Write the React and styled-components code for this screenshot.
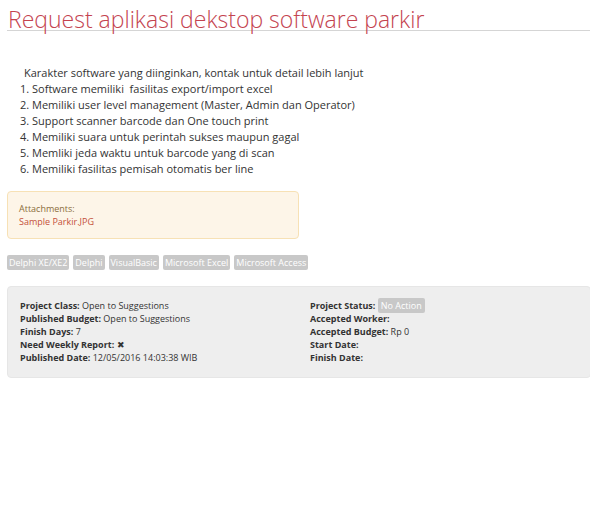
import React from 'react'
import styled, { createGlobalStyle } from 'styled-components'

const GlobalStyle = createGlobalStyle`
    body {
        margin: 8px 10px 8px 7px;
        background: #ffffff;
        font-family: "Open Sans", "Liberation Sans", sans-serif;
        color: #333333;
    }
`;

const details = [
    'Karakter software yang diinginkan, kontak untuk detail lebih lanjut',
    '1. Software memiliki  fasilitas export/import excel',
    '2. Memiliki user level management (Master, Admin dan Operator)',
    '3. Support scanner barcode dan One touch print',
    '4. Memiliki suara untuk perintah sukses maupun gagal',
    '5. Memliki jeda waktu untuk barcode yang di scan',
    '6. Memiliki fasilitas pemisah otomatis ber line',
];

const tags = ['Delphi XE/XE2', 'Delphi', 'VisualBasic', 'Microsoft Excel', 'Microsoft Access'];

export default function App() {
    return (
        <Page>
            <GlobalStyle />
            <Title>Request aplikasi dekstop software parkir</Title>
            <Description>
                {details.map((line, index) => (
                    <Line key={index} $indent={index === 0}>{line}</Line>
                ))}
            </Description>
            <Attachment>
                <AttachLabel>Attachments:</AttachLabel>
                <AttachLink>Sample Parkir.JPG</AttachLink>
            </Attachment>
            <Tags>
                {tags.map((tag) => (
                    <Tag key={tag}>{tag}</Tag>
                ))}
            </Tags>
            <InfoPanel>
                <InfoColumn>
                    <Row><Label>Project Class:</Label> Open to Suggestions</Row>
                    <Row><Label>Published Budget:</Label> Open to Suggestions</Row>
                    <Row><Label>Finish Days:</Label> 7</Row>
                    <Row><Label>Need Weekly Report:</Label> <Cross>✖</Cross></Row>
                    <Row><Label>Published Date:</Label> 12/05/2016 14:03:38 WIB</Row>
                </InfoColumn>
                <InfoColumn>
                    <Row><Label>Project Status:</Label> <Status>No Action</Status></Row>
                    <Row><Label>Accepted Worker:</Label></Row>
                    <Row><Label>Accepted Budget:</Label> Rp 0</Row>
                    <Row><Label>Start Date:</Label></Row>
                    <Row><Label>Finish Date:</Label></Row>
                </InfoColumn>
            </InfoPanel>
        </Page>
    )
}

const Page = styled.div`
    width: 584px;
    display: flex;
    flex-direction: column;
`;

const Title = styled.h1`
    margin: 0;
    padding-left: 1px;
    font-size: 23px;
    font-weight: 300;
    line-height: 22px;
    color: #c4434f;
    border-bottom: 1px solid #d5d5d5;
`;

const Description = styled.div`
    margin-top: 34px;
    padding-left: 13px;
    font-size: 11px;
    line-height: 16px;
    color: #333;
`;

const Line = styled.div`
    padding-left: ${(p) => (p.$indent ? '4px' : '0')};
    white-space: pre;
`;

const Attachment = styled.div`
    margin-top: 14px;
    width: 292px;
    box-sizing: border-box;
    padding: 10px 11px;
    background: #fdf5e8;
    border: 1px solid #f7e1b5;
    border-radius: 4px;
    font-size: 9px;
    line-height: 13px;
`;

const AttachLabel = styled.div`
    color: #8a6d3b;
`;

const AttachLink = styled.div`
    color: #c4503a;
`;

const Tags = styled.div`
    display: flex;
    gap: 4px;
    margin-top: 16px;
`;

const Tag = styled.span`
    background: #c8c8c8;
    color: #ffffff;
    font-size: 9px;
    line-height: 15px;
    padding: 0 2px;
    border-radius: 2px;
`;

const InfoPanel = styled.div`
    margin-top: 16px;
    display: grid;
    grid-template-columns: 290px 1fr;
    padding: 12px 12px 13px;
    background: #eeeeee;
    border: 1px solid #e6e6e6;
    border-radius: 4px;
    font-size: 9px;
    line-height: 13px;
    color: #333;
`;

const InfoColumn = styled.div`
    display: flex;
    flex-direction: column;
`;

const Row = styled.div`
    white-space: nowrap;
`;

const Label = styled.b`
    font-weight: 700;
`;

const Cross = styled.span`
    font-size: 9px;
`;

const Status = styled.span`
    background: #c8c8c8;
    color: #fff;
    padding: 1px 3px;
    border-radius: 2px;
`;
